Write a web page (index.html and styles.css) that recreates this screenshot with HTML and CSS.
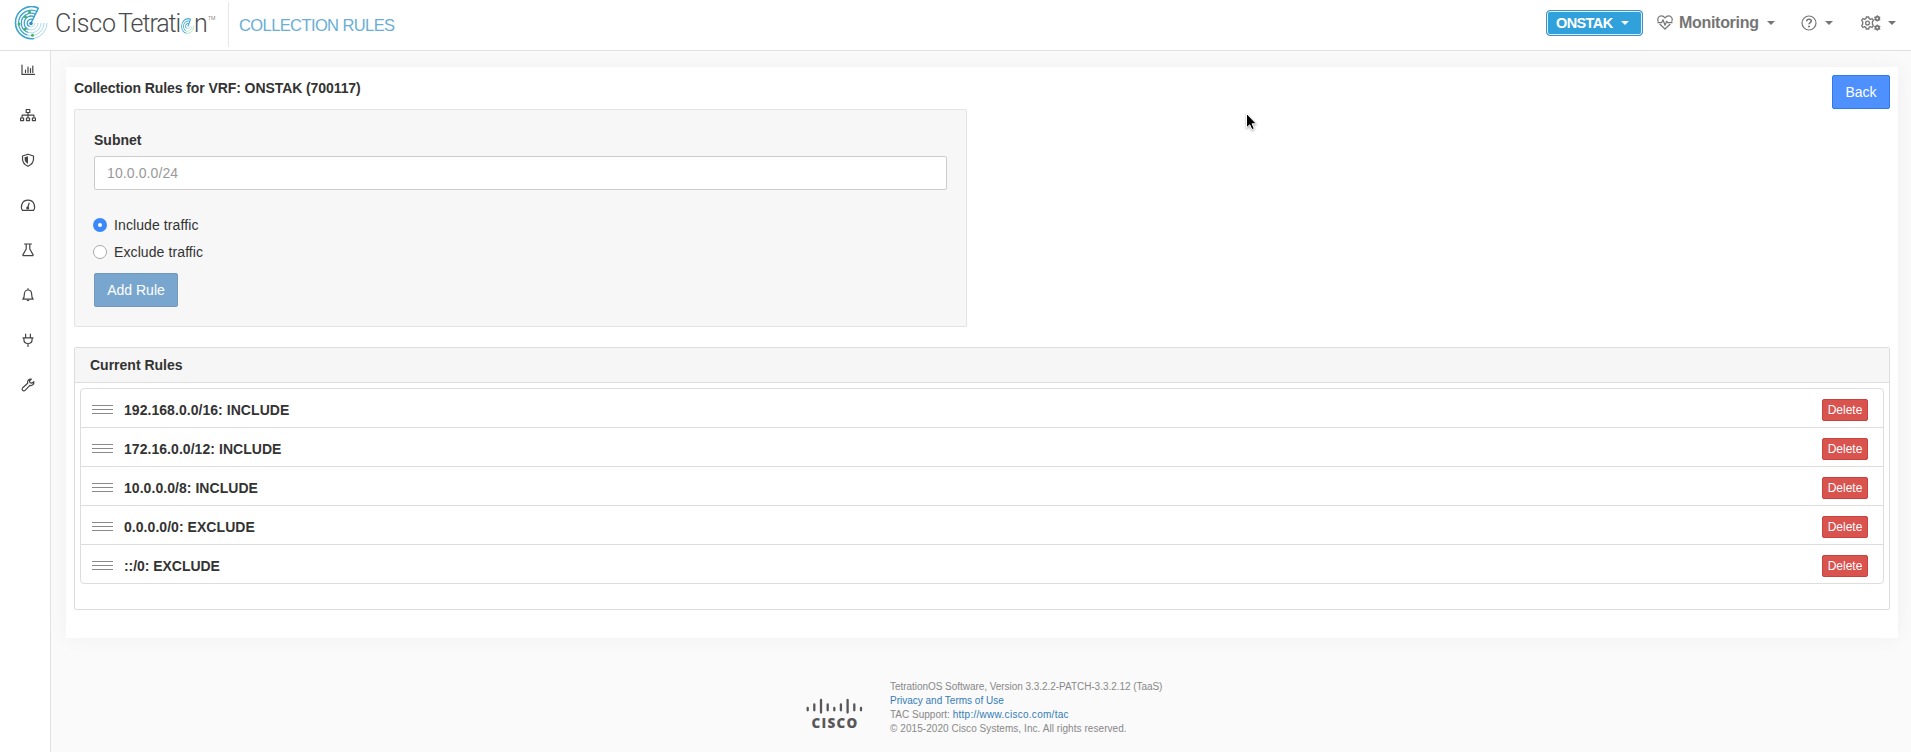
FILE: index.html
```html
<!DOCTYPE html>
<html lang="en">
<head>
<meta charset="utf-8">
<title>Collection Rules</title>
<link rel="stylesheet" href="styles.css">
</head>
<body>
<header class="topbar">
  <div class="brand">
    <svg class="brand-mark" width="34" height="34" viewBox="0 0 34 34" fill="none">
      <g stroke="#3da3cf" stroke-width="1.300">
        <path d="M24.5 2.200A16 16 0 0 0 1.500 17 16 16 0 0 0 20 32.500" stroke-width="1.600"/>
        <path d="M23.300 5.600A13 13 0 0 0 4.500 17a13 13 0 0 0 9 12.200"/>
        <path d="M21.900 8.300A10 10 0 0 0 7.300 17a10 10 0 0 0 6.700 9.400"/>
        <path d="M20.700 11A7 7 0 0 0 10.200 17a7 7 0 0 0 4.500 6.500"/>
        <path d="M19.300 13.700A4 4 0 0 0 13.200 17a4 4 0 0 0 2.500 3.700"/>
        <path d="M24.500 2 17 17" stroke-width="1.500"/>
      </g>
      <g stroke="#a9dbe8" stroke-width="1">
        <path d="M20 32.500A16 16 0 0 0 33 17"/>
        <path d="M13.500 29.200A13 13 0 0 0 30 17"/>
        <path d="M14 26.400A10 10 0 0 0 27 17"/>
        <path d="M14.700 23.500A7 7 0 0 0 24 17"/>
        <path d="M15.700 20.700A4 4 0 0 0 21 17"/>
      </g>
      <circle cx="17" cy="17.500" r="1.800" fill="#2d8fc4"/>
      <g fill="#45b35b"><circle cx="15.500" cy="6" r="1.500"/><circle cx="11.500" cy="11" r="1.500"/><circle cx="5" cy="18" r="1.500"/><circle cx="11" cy="23.200" r="1.500"/><circle cx="18.500" cy="29.300" r="1.500"/></g>
    </svg>
    <div class="wordmark"><span class="word-a">Cisco</span><span class="word-b">Tetrati</span><svg class="word-o" width="13" height="16" viewBox="0 0 34 34" preserveAspectRatio="none" fill="none">
      <g stroke="#49a9d3" stroke-width="2.200"><path d="M25 2C12 -1 1 7 1.500 18c.3 7 5 12.500 12.500 14.500"/><path d="M23 7C14 5 6.500 10 6.500 17.500c0 4 2 7.500 5.500 9.500"/><path d="M21 12c-5-1-9 1.500-9 5.500 0 2 1 3.500 3 4.500"/><path d="M25 2 18 18" stroke-width="3"/></g>
      <g stroke="#a8dccb" stroke-width="2"><path d="M14 32.500A16 16 0 0 0 33 17"/><path d="M12 27c7 3 15-1 16-9"/><path d="M15 22c4 1.500 8 0 8.500-4"/></g></svg><span class="word-c">n</span><sup class="tm">TM</sup></div>
  </div>
  <h1 class="page-name">COLLECTION RULES</h1>
  <nav class="tools">
    <button class="scope"><span class="scope-name">ONSTAK</span><i class="caret"></i></button>
    <a class="tool monitoring">
      <svg width="16" height="15" viewBox="0 0 16 15" fill="none" stroke="#757575" stroke-width="1.200" stroke-linejoin="round" stroke-linecap="round"><path d="M1.200 6.300C0 3.500 1.800.900 4.300.900 6 .900 7.200 1.700 8 3 8.800 1.700 10 .900 11.700.900c2.500 0 4.300 2.600 3.100 5.400M3 9.300l5 4.700 5-4.700"/><path d="M1 7.700h3.600L6 4.800l2 5.400 1.700-4 1 1.500H15"/></svg>
      <span>Monitoring</span><i class="caret"></i></a>
    <a class="tool help">
      <svg width="16" height="16" viewBox="0 0 16 16" fill="none" stroke="#757575"><circle cx="8" cy="8" r="7" stroke-width="1.200"/><path d="M5.700 6.200C5.800 4.800 6.800 4.200 8 4.200s2.300.7 2.300 1.900C10.300 7.500 8 7.700 8 9.300" stroke-width="1.600"/><circle cx="8" cy="11.400" r="1" fill="#757575" stroke="none"/></svg>
      <i class="caret"></i></a>
    <a class="tool settings">
      <svg width="20" height="16" viewBox="0 0 20 16" fill="none" stroke="#757575" stroke-width="1.300"><path d="M5.300 2h2.400l.4 1.700 1.300.6 1.700-.8 1.300 1.900-1 1.400v2.400l1 1.400-1.300 1.900-1.700-.8-1.300.6-.4 1.700H5.300l-.4-1.700-1.300-.6-1.700.8L.7 10.600l1-1.400V6.800l-1-1.400 1.200-1.900 1.700.8 1.300-.6z" stroke-linejoin="round"/><circle cx="6.500" cy="8" r="1.900"/><g stroke-width="1.800"><circle cx="16.300" cy="3.400" r="1.800"/><circle cx="16.300" cy="12.600" r="1.800"/></g><g stroke-width="1.200"><path d="M16.300.300v1M16.300 5.400v1M13.300 2l1 .5M18.300 4.500l1 .5M13.300 5l1-.5M18.300 2.500l1-.6M16.300 9.500v1M16.300 14.700v1M13.300 11.200l1 .5M18.300 13.700l1 .5M13.300 14.200l1-.5M18.300 11.700l1-.6"/></g></svg>
      <i class="caret"></i></a>
  </nav>
</header>
<div class="shell">
  <aside class="rail">
    <svg class="ico" viewBox="0 0 18 18"><path d="M3 4v9.400h12.500M6.500 11.500V9M9 11.500V6M11.500 11.500V7.500M13.800 11.500V5"/></svg>
    <svg class="ico" viewBox="0 0 18 18"><path d="M7.200 3.500h3.600v3H7.200zM1.600 12h3v2.600h-3zM7.500 12h3v2.600h-3zM13.400 12h3v2.600h-3zM9 6.500V12M3.100 12V9.200h11.800V12"/></svg>
    <svg class="ico" viewBox="0 0 18 18"><path d="M9 3.200 14.500 5v3c0 3.500-2.300 5.800-5.500 7.300C5.800 13.800 3.500 11.500 3.500 8V5z"/><path class="solid" d="M9 5.300v7.600C6.800 11.600 5.600 10 5.600 8V6.300z"/></svg>
    <svg class="ico" viewBox="0 0 18 18"><path d="M3.500 14.300C1.300 11.500 2.300 4.200 9 4.200s7.700 7.300 5.500 10.100zM8.700 11.700l1.400-4.500"/><circle class="solid" cx="8.700" cy="12" r="1.500"/></svg>
    <svg class="ico" viewBox="0 0 18 18"><path d="M5.500 3h7M7.200 3v5L4 13.600c-.3.600 0 1 .6 1h8.800c.6 0 .9-.4.6-1L10.800 8V3"/></svg>
    <svg class="ico" viewBox="0 0 18 18"><path d="M9 2.700v1.300M3.800 13.200c1.400-1.400 1.500-2.300 1.500-4.500C5.300 5.800 6.800 4 9 4s3.700 1.800 3.700 4.700c0 2.200.1 3.100 1.500 4.500z"/><path class="solid" d="M7.600 13.800h2.800a1.400 1.400 0 0 1-2.800 0z"/></svg>
    <svg class="ico" viewBox="0 0 18 18"><path d="M6.600 3.200v3.500M11.400 3.200v3.500M4 6.900h10M4.900 7v1.500c0 2.500 1.700 4 4.100 4s4.100-1.500 4.100-4V7M9 12.500v3"/></svg>
    <svg class="ico" viewBox="0 0 18 18"><path d="M12.300 3.200C9.700 2.900 8 5 8.700 7.200L3.700 11.800c-1.700 1.700.7 4.200 2.400 2.500L10.900 9.400c2.500.6 4.400-1.300 3.900-3.800l-1.900 1.600-1.900-.5-.5-1.800z"/></svg>
  </aside>
  <div class="content">
    <main class="card">
      <div class="card-head">
        <h2 class="title">Collection Rules for VRF: ONSTAK (700117)</h2>
        <button class="btn back">Back</button>
      </div>
      <form class="well">
        <label class="field-label" for="subnet">Subnet</label>
        <input class="field" id="subnet" type="text" placeholder="10.0.0.0/24">
        <label class="choice"><span class="dot on"></span><span>Include traffic</span></label>
        <label class="choice"><span class="dot"></span><span>Exclude traffic</span></label>
        <button class="btn add" type="button">Add Rule</button>
      </form>
      <section class="rules">
        <h3 class="rules-head">Current Rules</h3>
        <ul class="list">
          <li class="rule"><i class="grip"></i><b>192.168.0.0/16: INCLUDE</b><button class="del">Delete</button></li>
          <li class="rule"><i class="grip"></i><b>172.16.0.0/12: INCLUDE</b><button class="del">Delete</button></li>
          <li class="rule"><i class="grip"></i><b>10.0.0.0/8: INCLUDE</b><button class="del">Delete</button></li>
          <li class="rule"><i class="grip"></i><b>0.0.0.0/0: EXCLUDE</b><button class="del">Delete</button></li>
          <li class="rule"><i class="grip"></i><b class="tight">::/0: EXCLUDE</b><button class="del">Delete</button></li>
        </ul>
      </section>
    </main>
    <footer class="foot">
      <div class="cisco">
        <svg width="57" height="16" viewBox="0 0 57 16" stroke="#58585b" stroke-width="2.300" stroke-linecap="round"><path d="M1.700 10v2.300M8.300 6.500v5.800M15 2v12.500M21.700 6.500v5.800M28.300 10v2.300M34.900 6.500v5.800M41.600 2v12.500M48.300 6.500v5.800M55 10v2.300"/></svg>
        <span class="cisco-name">CISCO</span>
      </div>
      <div class="legal">
        <div class="l1">TetrationOS Software, Version 3.3.2.2-PATCH-3.3.2.12 (TaaS)</div>
        <div><a>Privacy and Terms of Use</a></div>
        <div>TAC Support: <a class="url">http://www.cisco.com/tac</a></div>
        <div class="l4">© 2015-2020 Cisco Systems, Inc. All rights reserved.</div>
      </div>
    </footer>
  </div>
</div>
<svg class="pointer" width="14" height="20" viewBox="0 0 14 20"><path d="M1.500 1.500v14.300l3.200-3 2.200 4.800 2.400-1-2.200-4.800h4.300z" fill="#000" stroke="#fff" stroke-width="1"/></svg>
</body>
</html>
```
FILE: styles.css
```css
* { box-sizing: border-box; }
body {
  margin: 0;
  width: 1911px;
  height: 752px;
  overflow: hidden;
  background: #fafafa;
  color: #333;
  font: 14px/20px "Liberation Sans", Arial, sans-serif;
  display: flex;
  flex-direction: column;
}
h1, h2, h3, ul { margin: 0; padding: 0; font-size: inherit; }
button { font-family: inherit; padding: 0; white-space: nowrap; }

.topbar {
  height: 51px;
  flex: none;
  display: flex;
  background: #fff;
  border-bottom: 1px solid #e0e0e0;
}
.brand {
  width: 229px;
  height: 45px;
  margin-top: 2px;
  padding: 4px 0 0 14px;
  display: flex;
  border-right: 1px solid #e7e7e7;
}
.brand-mark { flex: none; }
.wordmark {
  display: flex;
  flex: none;
  margin: 3px 0 0 7px;
  font: 300 25px/30px Roboto, sans-serif;
  color: #4a4a4c;
  white-space: nowrap;
}
.word-a { width: 63px; letter-spacing: -0.1px; }
.word-b { width: 62px; letter-spacing: -1.1px; }
.word-o { flex: none; margin: 9px 0 0 1px; }
.word-c { width: 14px; }
.tm { font-size: 5px; line-height: 5px; margin-top: 7px; }
.page-name {
  margin: 10px 0 0 10px;
  font-size: 16.5px;
  font-weight: 400;
  line-height: 30px;
  letter-spacing: -0.6px;
  color: #6aaed6;
}
.tools {
  margin-left: auto;
  padding: 10px 15px 0 0;
  display: flex;
  color: #757575;
  font-size: 16px;
  font-weight: 700;
}
.caret {
  width: 0;
  height: 0;
  flex: none;
  border: 4px solid transparent;
  border-top-color: currentColor;
  border-bottom: 0;
}
.scope {
  width: 97px;
  height: 26px;
  padding: 0 0 0 9px;
  display: flex;
  align-items: center;
  color: #fff;
  background: #31a1db;
  border: 1px solid #4790bd;
  border-radius: 4px;
  box-shadow: inset 0 0 0 1px #d9effa;
  font-size: 14.5px;
  font-weight: 700;
}
.scope-name { width: 65px; text-align: left; letter-spacing: -0.6px; }
.tool { display: flex; align-items: center; height: 25px; }
.monitoring { margin-left: 14px; }
.monitoring span { margin: 0 9px 0 6px; width: 79px; letter-spacing: -0.3px; }
.help { margin-left: 26px; }
.help .caret { margin-left: 8px; }
.settings { margin-left: 28px; }
.settings .caret { margin-left: 7px; }

.shell { flex: 1; display: flex; min-height: 0; }
.rail {
  width: 51px;
  flex: none;
  padding: 10px 0 0 19px;
  display: flex;
  flex-direction: column;
  gap: 27px;
  background: #fff;
  border-right: 1px solid #e2e2e2;
}
.ico {
  width: 18px;
  height: 18px;
  flex: none;
  fill: none;
  stroke: #444;
  stroke-width: 1.2;
  stroke-linecap: round;
  stroke-linejoin: round;
}
.solid { fill: #444; stroke: none; }

.content { flex: 1; padding: 16px 13px 0 15px; }
.card {
  height: 571px;
  padding: 8px 8px 0;
  background: #fff;
  box-shadow: 0 0 20px rgba(0, 0, 0, .045);
}
.card-head { height: 34px; display: flex; justify-content: space-between; }
.title { margin-top: 3px; font-weight: 700; letter-spacing: -0.08px; }
.btn {
  height: 34px;
  border-radius: 2px;
  color: #fff;
  font-size: 14px;
}
.back { width: 58px; background: #4d90fe; border: 1px solid #3079ed; }
.well {
  width: 893px;
  height: 218px;
  padding: 20px 19px 0;
  display: flex;
  flex-direction: column;
  background: #f7f7f7;
  border: 1px solid #e3e3e3;
  border-radius: 2px;
}
.field-label { font-weight: 700; margin-bottom: 6px; }
.field {
  height: 34px;
  padding: 0 12px;
  border: 1px solid #ccc;
  border-radius: 2px;
  background: #fff;
  font: inherit;
  letter-spacing: 0.1px;
  margin-bottom: 25px;
}
.field::placeholder { color: #999; opacity: 1; }
.choice { display: flex; align-items: center; gap: 7px; height: 20px; margin: 0 0 7px -1px; letter-spacing: 0.1px; }
.dot { width: 14px; height: 14px; border-radius: 50%; border: 1px solid #aaa; background: #fff; }
.dot.on { border: 5px solid #3b88fd; }
.add { width: 84px; margin-top: 4px; background: #79a6cf; border: 1px solid #7299bd; }

.rules {
  margin-top: 20px;
  height: 263px;
  border: 1px solid #ddd;
  border-radius: 2px;
}
.rules-head {
  height: 35px;
  padding: 7px 15px;
  font-weight: 700;
  background: #f6f6f6;
  border-bottom: 1px solid #ddd;
}
.list {
  margin: 5px;
  list-style: none;
  border: 1px solid #ddd;
  border-radius: 4px;
}
.rule {
  height: 39px;
  display: flex;
  align-items: center;
  padding: 4px 15px 0 11px;
  border-bottom: 1px solid #ddd;
}
.rule:last-child { height: 38px; border-bottom: 0; }
.rule b { flex: 1; letter-spacing: 0.05px; }
.rule .tight { letter-spacing: -0.05px; }
.grip {
  width: 21px;
  height: 9px;
  margin: 0 11px 1px 0;
  border: solid #8a8a8a;
  border-width: 1px 0;
  background: linear-gradient(#8a8a8a, #8a8a8a) 0 3px / 100% 1px no-repeat;
}
.del {
  width: 46px;
  height: 22px;
  margin-bottom: 1px;
  color: #fff;
  background: #d9534f;
  border: 1px solid #c9423d;
  border-radius: 2px;
  font-size: 12px;
}

.foot { display: flex; padding: 42px 0 0 740px; }
.cisco { width: 57px; margin-top: 18px; display: flex; flex-direction: column; align-items: center; }
.cisco-name {
  margin: 2px 0 0 1px;
  font: 800 13.5px/15px "Open Sans", sans-serif;
  letter-spacing: 1.2px;
  color: #58585b;
}
.legal { margin-left: 27px; font-size: 10px; line-height: 14px; color: #888; white-space: nowrap; }
.legal a { color: #337ab7; }
.legal .url { letter-spacing: 0.28px; }
.l1 { letter-spacing: -0.04px; }
.l4 { letter-spacing: 0.06px; }

.pointer { position: absolute; left: 1245px; top: 112px; filter: drop-shadow(0 1px 1px rgba(0, 0, 0, .35)); }
```
